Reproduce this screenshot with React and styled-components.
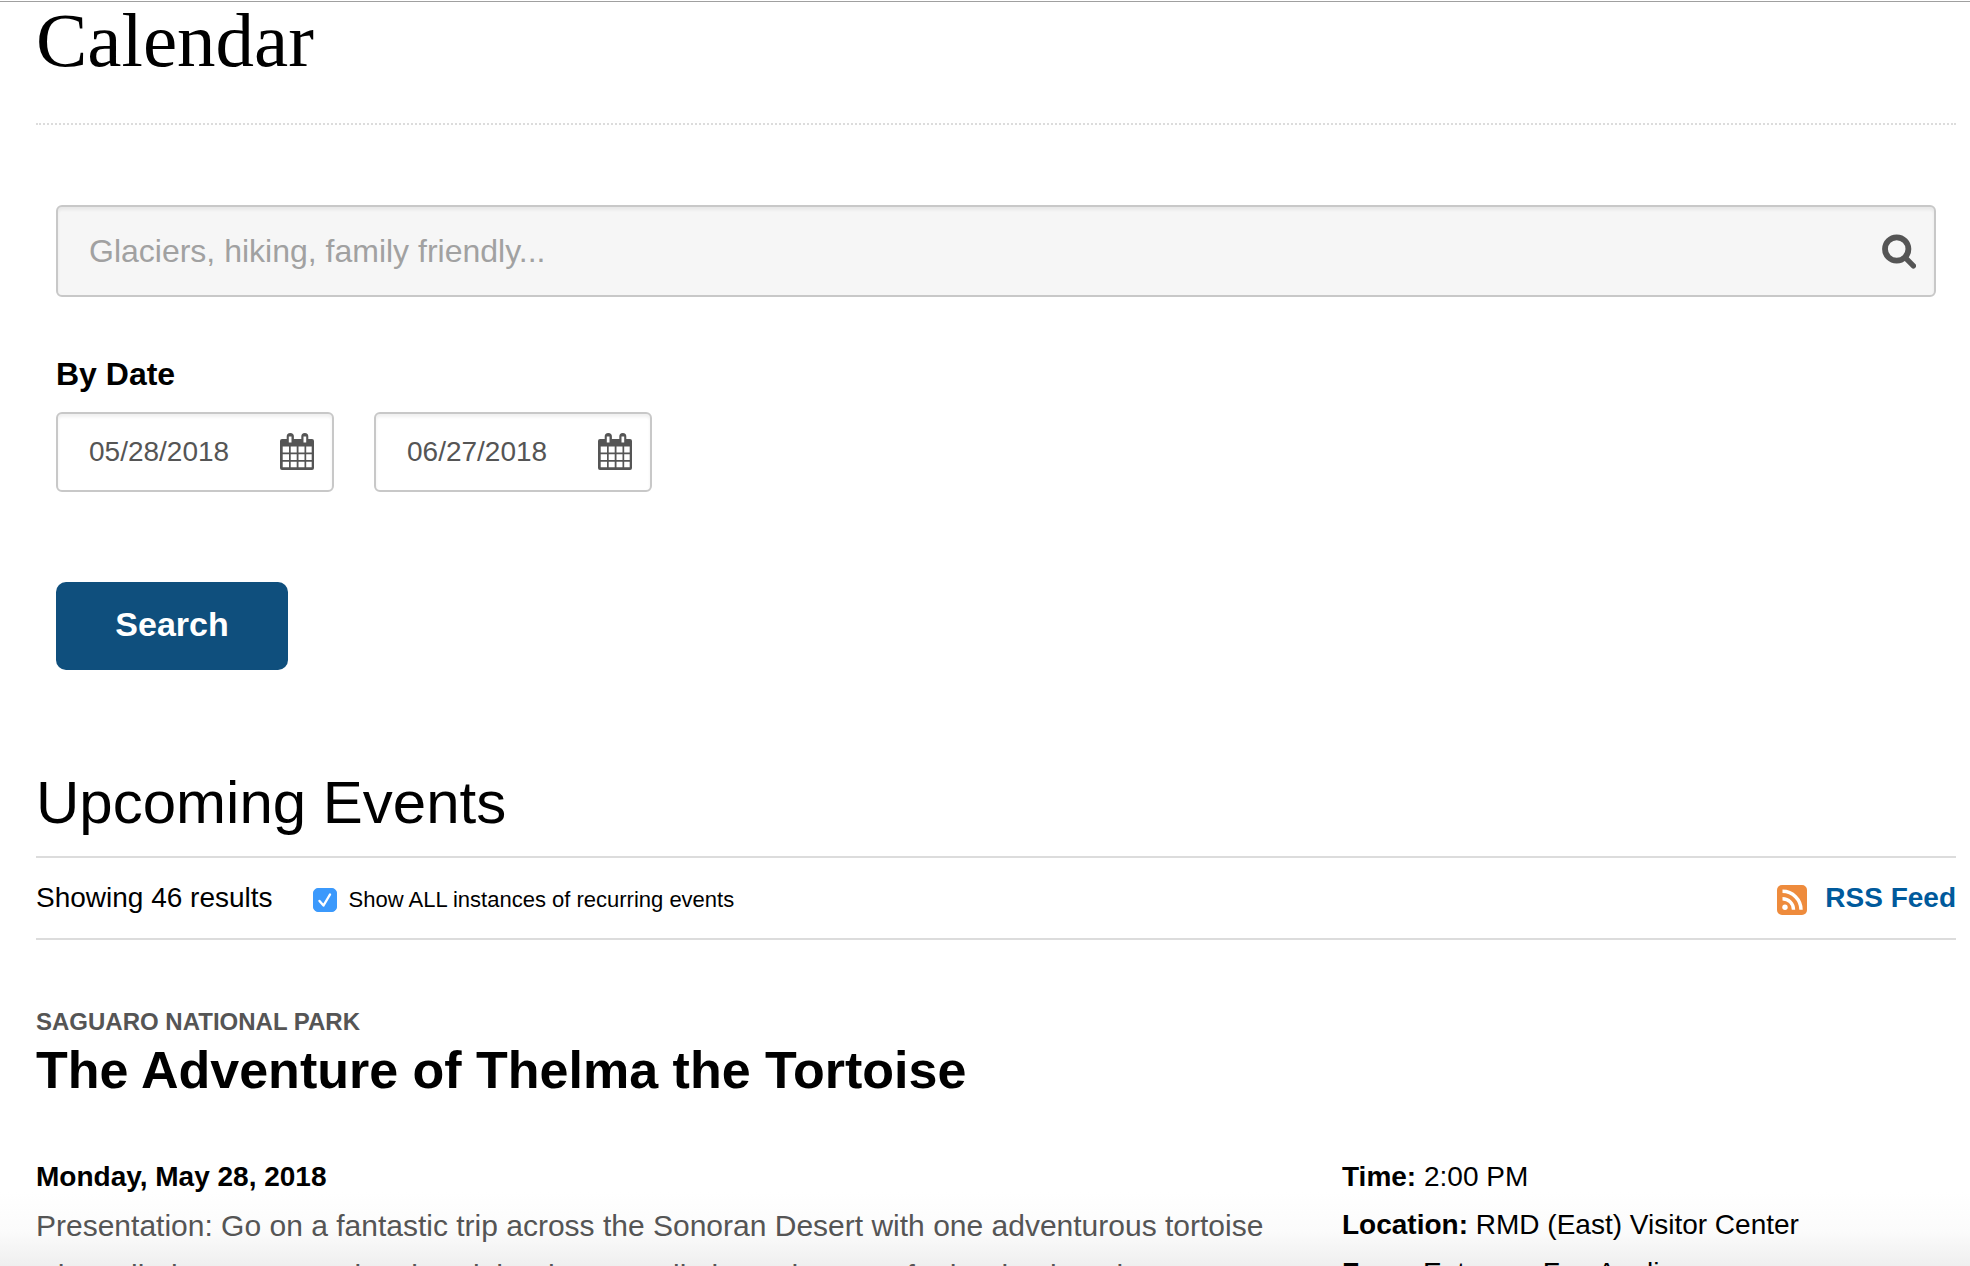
import React from "react";
import styled, { createGlobalStyle } from "styled-components";

const GlobalStyle = createGlobalStyle`
  *, *::before, *::after { box-sizing: border-box; }
  body {
    margin: 0;
    background: #fff;
    color: #000;
    font-family: "Liberation Sans", Arial, sans-serif;
    font-size: 28px;
    line-height: 48px;
  }
`;

const Page = styled.div`
  height: 100vh;
  overflow: hidden;
  padding-top: 1px;
  background: linear-gradient(to top, #efefef, #f6f6f6 20px, #fbfbfb 34px, #fff 74px) no-repeat;
`;

const Content = styled.main`
  padding: 0 14px 0 36px;
  border-top: 1px solid #a0a0a0;
`;

const PageTitle = styled.h1`
  margin: 0;
  height: 123px;
  border-bottom: 2px dotted #dcdcdc;
  font: 400 77px/76px "Liberation Serif", Georgia, serif;
`;

const SearchForm = styled.form`
  display: flex;
  flex-direction: column;
  align-items: flex-start;
  padding: 80px 20px 0;
`;

const FieldBox = styled.div`
  display: flex;
  align-items: center;
  width: ${(p) => (p.$wide ? "100%" : "278px")};
  height: ${(p) => (p.$wide ? "92px" : "80px")};
  padding-right: 18px;
  border: 2px solid #c8c8c8;
  border-radius: 6px;
  background: ${(p) => (p.$wide ? "#f6f6f6" : "#fff")};
  box-shadow: inset 0 3px 3px rgba(0, 0, 0, 0.06);
  color: #555;
`;

const TextInput = styled.input`
  flex: 1;
  min-width: 0;
  height: 100%;
  padding: 0 0 0 31px;
  border: 0;
  outline: 0;
  background: transparent;
  color: #555;
  font: inherit;
  font-size: ${(p) => (p.$large ? "32px" : "28px")};
  &::placeholder { color: #a1a1a1; opacity: 1; }
`;

const IconButton = styled.button`
  display: flex;
  padding: 0;
  border: 0;
  background: transparent;
  color: inherit;
`;

const DateGroup = styled.fieldset`
  margin: 53px 0 0;
  padding: 0;
  border: 0;
`;

const DateLegend = styled.legend`
  padding: 0 0 14px;
  font-size: 32px;
  font-weight: 700;
  line-height: 48px;
`;

const DateRow = styled.div`
  display: flex;
  gap: 40px;
`;

const SubmitButton = styled.button`
  width: 232px;
  height: 88px;
  margin-top: 90px;
  padding: 0 0 4px;
  border: 0;
  border-radius: 10px;
  background: #0f4f7d;
  color: #fff;
  font: inherit;
  font-size: 34px;
  font-weight: 700;
`;

const SectionTitle = styled.h2`
  margin: 96px 0 0;
  font-size: 60px;
  font-weight: 400;
  line-height: 74px;
`;

const ResultsBar = styled.div`
  display: flex;
  align-items: center;
  height: 84px;
  margin-top: 16px;
  border: solid #dcdcdc;
  border-width: 2px 0;
`;

const CheckLabel = styled.label`
  display: flex;
  align-items: center;
  gap: 12px;
  margin-left: 40px;
  padding-top: 4px;
  font-size: 22px;
`;

const CheckWrap = styled.span`
  display: grid;
  width: 24px;
  height: 24px;
  & > * { grid-area: 1 / 1; }
  svg { pointer-events: none; visibility: hidden; }
  input:checked + svg { visibility: visible; }
`;

const Checkbox = styled.input`
  appearance: none;
  width: 24px;
  height: 24px;
  margin: 0;
  border: 1px solid #b5b5b5;
  border-radius: 5px;
  &:checked { border-color: #3b99fc; background: #3b99fc; }
`;

const FeedLink = styled.a`
  display: flex;
  align-items: center;
  gap: 18px;
  margin-left: auto;
  color: #005a9c;
  font-weight: 700;
  text-decoration: none;
  svg { margin-top: 4px; }
`;

const Event = styled.article`
  padding-top: 64px;
`;

const ParkName = styled.p`
  margin: 0;
  color: #555;
  font-size: 24px;
  font-weight: 700;
  line-height: 36px;
`;

const EventTitle = styled.h3`
  margin: 0;
  font-size: 52px;
  line-height: 60px;
`;

const EventBody = styled.div`
  display: grid;
  grid-template-columns: 1306fr 614fr;
  margin-top: 53px;
`;

const EventSummary = styled.div`
  padding-right: 64px;
`;

const EventDate = styled.p`
  margin: 0;
  font-weight: 700;
`;

const Description = styled.p`
  margin: 0;
  color: #555;
  font-size: 30px;
  line-height: 50px;
`;

const Detail = styled.p`
  margin: 0;
`;

function SearchIcon() {
  return (
    <svg width="34" height="36" viewBox="0 0 34 36" fill="none" stroke="currentColor" aria-hidden="true">
      <circle cx="14.700" cy="16" r="11.700" strokeWidth="5.800" />
      <path d="M23.500 24.900 31.400 32.800" strokeWidth="5.400" strokeLinecap="round" />
    </svg>
  );
}

function CalendarIcon() {
  return (
    <svg width="34" height="38" viewBox="0 0 34 38" fill="currentColor" fillRule="evenodd" aria-hidden="true">
      <path d="M2 6h4.700V3.500a3.600 3.500 0 0 1 7.200 0V6h7.400V3.500a3.500 3.500 0 0 1 7 0V6H32a2 2 0 0 1 2 2v27a2 2 0 0 1-2 2H2a2 2 0 0 1-2-2V8a2 2 0 0 1 2-2Z M8.800 3.500v6h2.700v-6Z M23.500 3.500v6h2.700v-6Z M2.700 13.500v6H9v-6Z M10.700 13.500v6h6v-6Z M18.500 13.500v6h6v-6Z M26.200 13.500v6h5.500v-6Z M2.700 21.300v5.700H9v-5.700Z M10.700 21.300v5.700h6v-5.700Z M18.500 21.300v5.700h6v-5.700Z M26.200 21.300v5.700h5.500v-5.700Z M2.700 28.700v5.600H9v-5.600Z M10.700 28.700v5.600h6v-5.600Z M18.500 28.700v5.600h6v-5.600Z M26.200 28.700v5.600h5.500v-5.600Z" />
    </svg>
  );
}

function CheckIcon() {
  return (
    <svg width="24" height="24" viewBox="0 0 24 24" fill="none" stroke="#fff" strokeWidth="2.400" strokeLinecap="round" strokeLinejoin="round" aria-hidden="true">
      <path d="M6.500 13l4 4.500L17 6.500" />
    </svg>
  );
}

function FeedIcon() {
  return (
    <svg width="30" height="30" viewBox="0 0 30 30" aria-hidden="true">
      <rect width="30" height="30" rx="5" fill="#ee8b3c" />
      <circle cx="8" cy="22.300" r="2.700" fill="#fff" />
      <path d="M5.500 13.700a11 11 0 0 1 11 11M5.500 6.300a18.500 18.500 0 0 1 18.500 18.400" fill="none" stroke="#fff" strokeWidth="3.400" />
    </svg>
  );
}

function DateField({ label, value }) {
  return (
    <FieldBox>
      <TextInput type="text" aria-label={label} defaultValue={value} />
      <IconButton type="button" aria-label={`Choose ${label.toLowerCase()}`}>
        <CalendarIcon />
      </IconButton>
    </FieldBox>
  );
}

export default function App() {
  return (
    <>
      <GlobalStyle />
      <Page>
        <Content>
          <PageTitle>Calendar</PageTitle>
          <SearchForm onSubmit={(e) => e.preventDefault()}>
            <FieldBox $wide>
              <TextInput $large type="text" aria-label="Search events" placeholder="Glaciers, hiking, family friendly..." />
              <IconButton type="submit" aria-label="Search events">
                <SearchIcon />
              </IconButton>
            </FieldBox>
            <DateGroup>
              <DateLegend>By Date</DateLegend>
              <DateRow>
                <DateField label="Start date" value="05/28/2018" />
                <DateField label="End date" value="06/27/2018" />
              </DateRow>
            </DateGroup>
            <SubmitButton type="submit">Search</SubmitButton>
          </SearchForm>
          <SectionTitle>Upcoming Events</SectionTitle>
          <ResultsBar>
            <span>Showing 46 results</span>
            <CheckLabel>
              <CheckWrap>
                <Checkbox type="checkbox" defaultChecked />
                <CheckIcon />
              </CheckWrap>
              Show ALL instances of recurring events
            </CheckLabel>
            <FeedLink href="#rss">
              <FeedIcon />
              RSS Feed
            </FeedLink>
          </ResultsBar>
          <Event>
            <ParkName>SAGUARO NATIONAL PARK</ParkName>
            <EventTitle>The Adventure of Thelma the Tortoise</EventTitle>
            <EventBody>
              <EventSummary>
                <EventDate>Monday, May 28, 2018</EventDate>
                <Description>
                  Presentation: Go on a fantastic trip across the Sonoran Desert with one adventurous tortoise
                  who called Saguaro National Park her home until almost her own further backyard.
                </Description>
              </EventSummary>
              <div>
                <Detail><b>Time:</b> 2:00 PM</Detail>
                <Detail><b>Location:</b> RMD (East) Visitor Center</Detail>
                <Detail><b>Fees:</b> Entrance Fee Applies</Detail>
              </div>
            </EventBody>
          </Event>
        </Content>
      </Page>
    </>
  );
}
